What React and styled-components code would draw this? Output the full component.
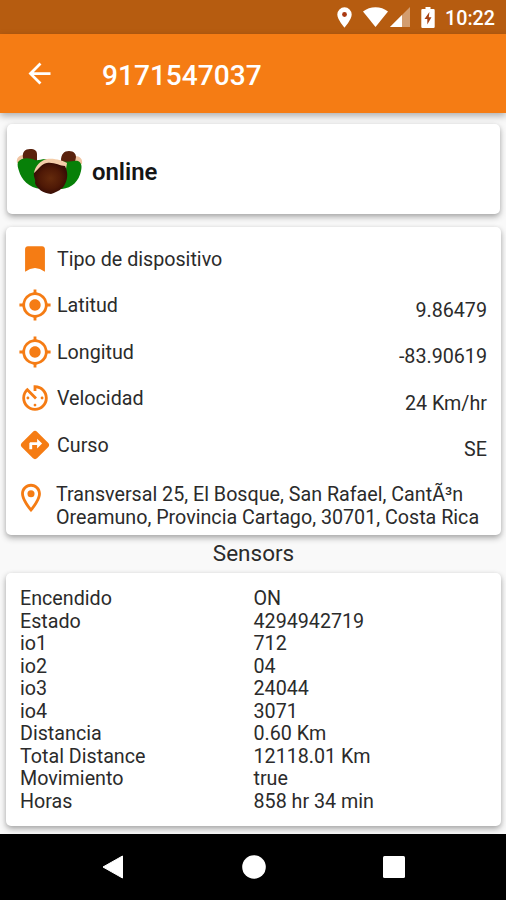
import styled, { createGlobalStyle } from 'styled-components';
import {
    MdArrowBack,
    MdAvTimer,
    MdDirections,
    MdGpsFixed,
    MdOutlineLocationOn,
} from 'react-icons/md';

/* Marcador con el corte inferior curvo */
function Marcador({ size, color }) {
    return (
        <svg width={size} height={size} viewBox="0 0 24 24">
            <path d="M17 3H7C5.9 3 5 3.9 5 5V21Q12 15.8 19 21V5C19 3.9 18.1 3 17 3Z" fill={color} />
        </svg>
    );
}

const detalles = [
    { icono: Marcador, nombre: 'Tipo de dispositivo', valor: '' },
    { icono: MdGpsFixed, nombre: 'Latitud', valor: '9.86479' },
    { icono: MdGpsFixed, nombre: 'Longitud', valor: '-83.90619' },
    { icono: MdAvTimer, nombre: 'Velocidad', valor: '24 Km/hr' },
    { icono: MdDirections, nombre: 'Curso', valor: 'SE' },
];

const sensores = [
    ['Encendido', 'ON'],
    ['Estado', '4294942719'],
    ['io1', '712'],
    ['io2', '04'],
    ['io3', '24044'],
    ['io4', '3071'],
    ['Distancia', '0.60 Km'],
    ['Total Distance', '12118.01 Km'],
    ['Movimiento', 'true'],
    ['Horas', '858 hr 34 min'],
];

/* Persona vista desde arriba */
function Persona() {
    return (
        <svg width="68" height="50" viewBox="0 0 68 50">
            <defs>
                <radialGradient id="pelo">
                    <stop offset="0" stopColor="#642a0c" />
                    <stop offset="0.65" stopColor="#4f1906" />
                    <stop offset="1" stopColor="#380d05" />
                </radialGradient>
            </defs>
            <path d="M1 17C0 12 3 9 8 9L20 12L8 18ZM66 18C67 13 64 10 59 10L47 13L58 19Z" fill="#f0c5a3" />
            <path d="M7 12C6 6 9 3 14 3C19 3 21 5 21 8L21 15H8ZM45 15C45 8 48 5 53 5C58 5 60 8 60 11L59 16H45Z" fill="#5a220d" />
            <path d="M2 16C6 11 14 12 19 14C22 15 25 13 29 13L45 15C52 17 58 14 62 15C66 17 66 21 65 25C63 35 56 42 46 43H25C13 42 5 33 3 25C2 22 1 19 2 16Z" fill="#078008" />
            <path d="M18 27C19 20 25 14 31 13C39 12 47 15 51 17L50 23L31 17L20 28Z" fill="#f4cda9" />
            <path d="M18 27C22 24 25 18 31 17C38 16 44 20 49 20C52 26 52 32 49 38C47 43 41 46 35 48C27 47 21 43 19 37C20 34 17 30 18 27Z" fill="url(#pelo)" />
        </svg>
    );
}

export default function App() {
    return (
        <Pantalla>
            <GlobalStyle />
            <BarraEstado>
                <svg width="15" height="21" viewBox="0 0 15 21">
                    <path d="M7.5 0.3A7.2 7.2 0 0 0 0.3 7.5C0.3 12.5 7.5 20.7 7.5 20.7S14.7 12.5 14.7 7.5A7.2 7.2 0 0 0 7.5 0.3Z" fill="#fff" />
                    <circle cx="7.5" cy="7.5" r="2.4" fill="#a93810" />
                </svg>
                <Senal width="25" height="20" viewBox="0 0 25 20">
                    <path d="M0 4.5C7-1.3 18-1.3 25 4.5L12.5 20Z" fill="#fff" />
                </Senal>
                <Senal width="20" height="20" viewBox="0 0 20 20">
                    <path d="M20 0V20H0Z" fill="#fff" fillOpacity="0.4" />
                    <path d="M12 8V20H0Z" fill="#fff" />
                </Senal>
                <Bateria width="14" height="21" viewBox="0 0 14 21">
                    <path d="M4.5 0H9.5V2H12.5Q13.7 2 13.7 3.2V19.8Q13.7 21 12.5 21H1.5Q0.3 21 0.3 19.8V3.2Q0.3 2 1.5 2H4.5Z" fill="#fff" />
                    <path d="M8.4 5L3.5 12H6.3V17.5L10.5 10.3H7.8Z" fill="#a64012" />
                </Bateria>
                <Hora>10:22</Hora>
            </BarraEstado>
            <BarraTitulo>
                <MdArrowBack size={33} />
                <Titulo>9171547037</Titulo>
            </BarraTitulo>
            <Contenido>
                <TarjetaEstado>
                    <Persona />
                    <Estado>online</Estado>
                </TarjetaEstado>
                <TarjetaDetalle>
                    {detalles.map(({ icono: Icono, nombre, valor }) => (
                        <Fila key={nombre}>
                            <Icono size={34} color="#f57c14" />
                            <Nombre>{nombre}</Nombre>
                            <Valor>{valor}</Valor>
                        </Fila>
                    ))}
                    <Direccion>
                        <MdOutlineLocationOn size={34} color="#f57c14" />
                        <TextoDireccion>
                            Transversal 25, El Bosque, San Rafael, CantÃ³n
                            <br />
                            Oreamuno, Provincia Cartago, 30701, Costa Rica
                        </TextoDireccion>
                    </Direccion>
                </TarjetaDetalle>
                <Subtitulo>Sensors</Subtitulo>
                <TarjetaSensores>
                    {sensores.map(([nombre, valor]) => (
                        <FilaSensor key={nombre}>
                            <span>{nombre}</span>
                            <span>{valor}</span>
                        </FilaSensor>
                    ))}
                </TarjetaSensores>
            </Contenido>
            <BarraNavegacion>
                <svg width="22" height="24" viewBox="0 0 22 24">
                    <path d="M20.5 1V23L1 12Z" fill="#fff" stroke="#fff" strokeLinejoin="round" />
                </svg>
                <svg width="24" height="24" viewBox="0 0 24 24">
                    <circle cx="12" cy="12" r="11.8" fill="#fff" />
                </svg>
                <svg width="22" height="24" viewBox="0 0 22 24">
                    <rect x="0" y="1" width="22" height="22" rx="1.5" fill="#fff" />
                </svg>
            </BarraNavegacion>
        </Pantalla>
    );
}

const GlobalStyle = createGlobalStyle`
body {
    margin: 0;
}
* {
    box-sizing: border-box;
}
svg {
    display: block;
    flex-shrink: 0;
}
`

const Pantalla = styled.div`
display: flex;
flex-direction: column;
width: 506px;
height: 900px;
overflow: hidden;
background: #f9f9f9;
color: #2b2b2b;
font-family: Roboto, sans-serif;
font-size: 19.7px;
`

const BarraEstado = styled.div`
display: flex;
align-items: center;
height: 34px;
flex-shrink: 0;
padding-left: 337px;
background: #b65c10;
color: #fff;
`

const Senal = styled.svg`
margin-left: 11px;
& + & {
    margin-left: 2px;
}
`

const Bateria = styled.svg`
margin-left: 11px;
`

const Hora = styled.span`
margin: 2px 0 0 10px;
font-weight: 500;
`

const BarraTitulo = styled.header`
display: flex;
align-items: center;
height: 79px;
flex-shrink: 0;
padding-left: 23px;
background: #f57c14;
color: #fff;
box-shadow: 0 3px 7px rgba(0, 0, 0, 0.3);
`

const Titulo = styled.h1`
margin: 3px 0 0 46px;
font-size: 28.1px;
font-weight: 500;
`

const Contenido = styled.main`
display: flex;
flex-direction: column;
flex: 1;
padding: 11px 5px 0 6px;
`

const Tarjeta = styled.section`
flex-shrink: 0;
background: #fff;
border-radius: 5px;
box-shadow: 0 3px 6px rgba(0, 0, 0, 0.3), 0 1px 4px rgba(0, 0, 0, 0.08);
`

const TarjetaEstado = styled(Tarjeta)`
display: flex;
align-items: center;
height: 90px;
margin: 0 1px 13px 1px;
padding: 4px 0 0 9px;
`

const Estado = styled.span`
margin: 2px 0 0 8px;
color: #151515;
font-size: 23.9px;
font-weight: 600;
`

const TarjetaDetalle = styled(Tarjeta)`
height: 308px;
padding: 8.5px 14px 0 12px;
`

const Fila = styled.div`
display: flex;
align-items: center;
height: 46.5px;
`

const Nombre = styled.span`
margin: 1px 0 0 5px;
`

const Valor = styled.span`
margin: 10px 0 0 auto;
`

const Direccion = styled.div`
display: flex;
margin: 12.5px 0 0 -4px;
`

const TextoDireccion = styled.p`
margin: 3.5px 0 0 8px;
line-height: 22.5px;
white-space: nowrap;
`

const Subtitulo = styled.h2`
margin: 0;
height: 38px;
line-height: 37px;
font-size: 22.5px;
font-weight: 400;
text-align: center;
`

const TarjetaSensores = styled(Tarjeta)`
height: 253px;
padding: 15px 14px 0 14px;
`

const FilaSensor = styled.div`
display: grid;
grid-template-columns: 233.5px 1fr;
line-height: 22.5px;
`

const BarraNavegacion = styled.nav`
display: flex;
align-items: center;
justify-content: space-between;
height: 66.5px;
flex-shrink: 0;
padding: 0 101px 0 102px;
background: #000;
`
